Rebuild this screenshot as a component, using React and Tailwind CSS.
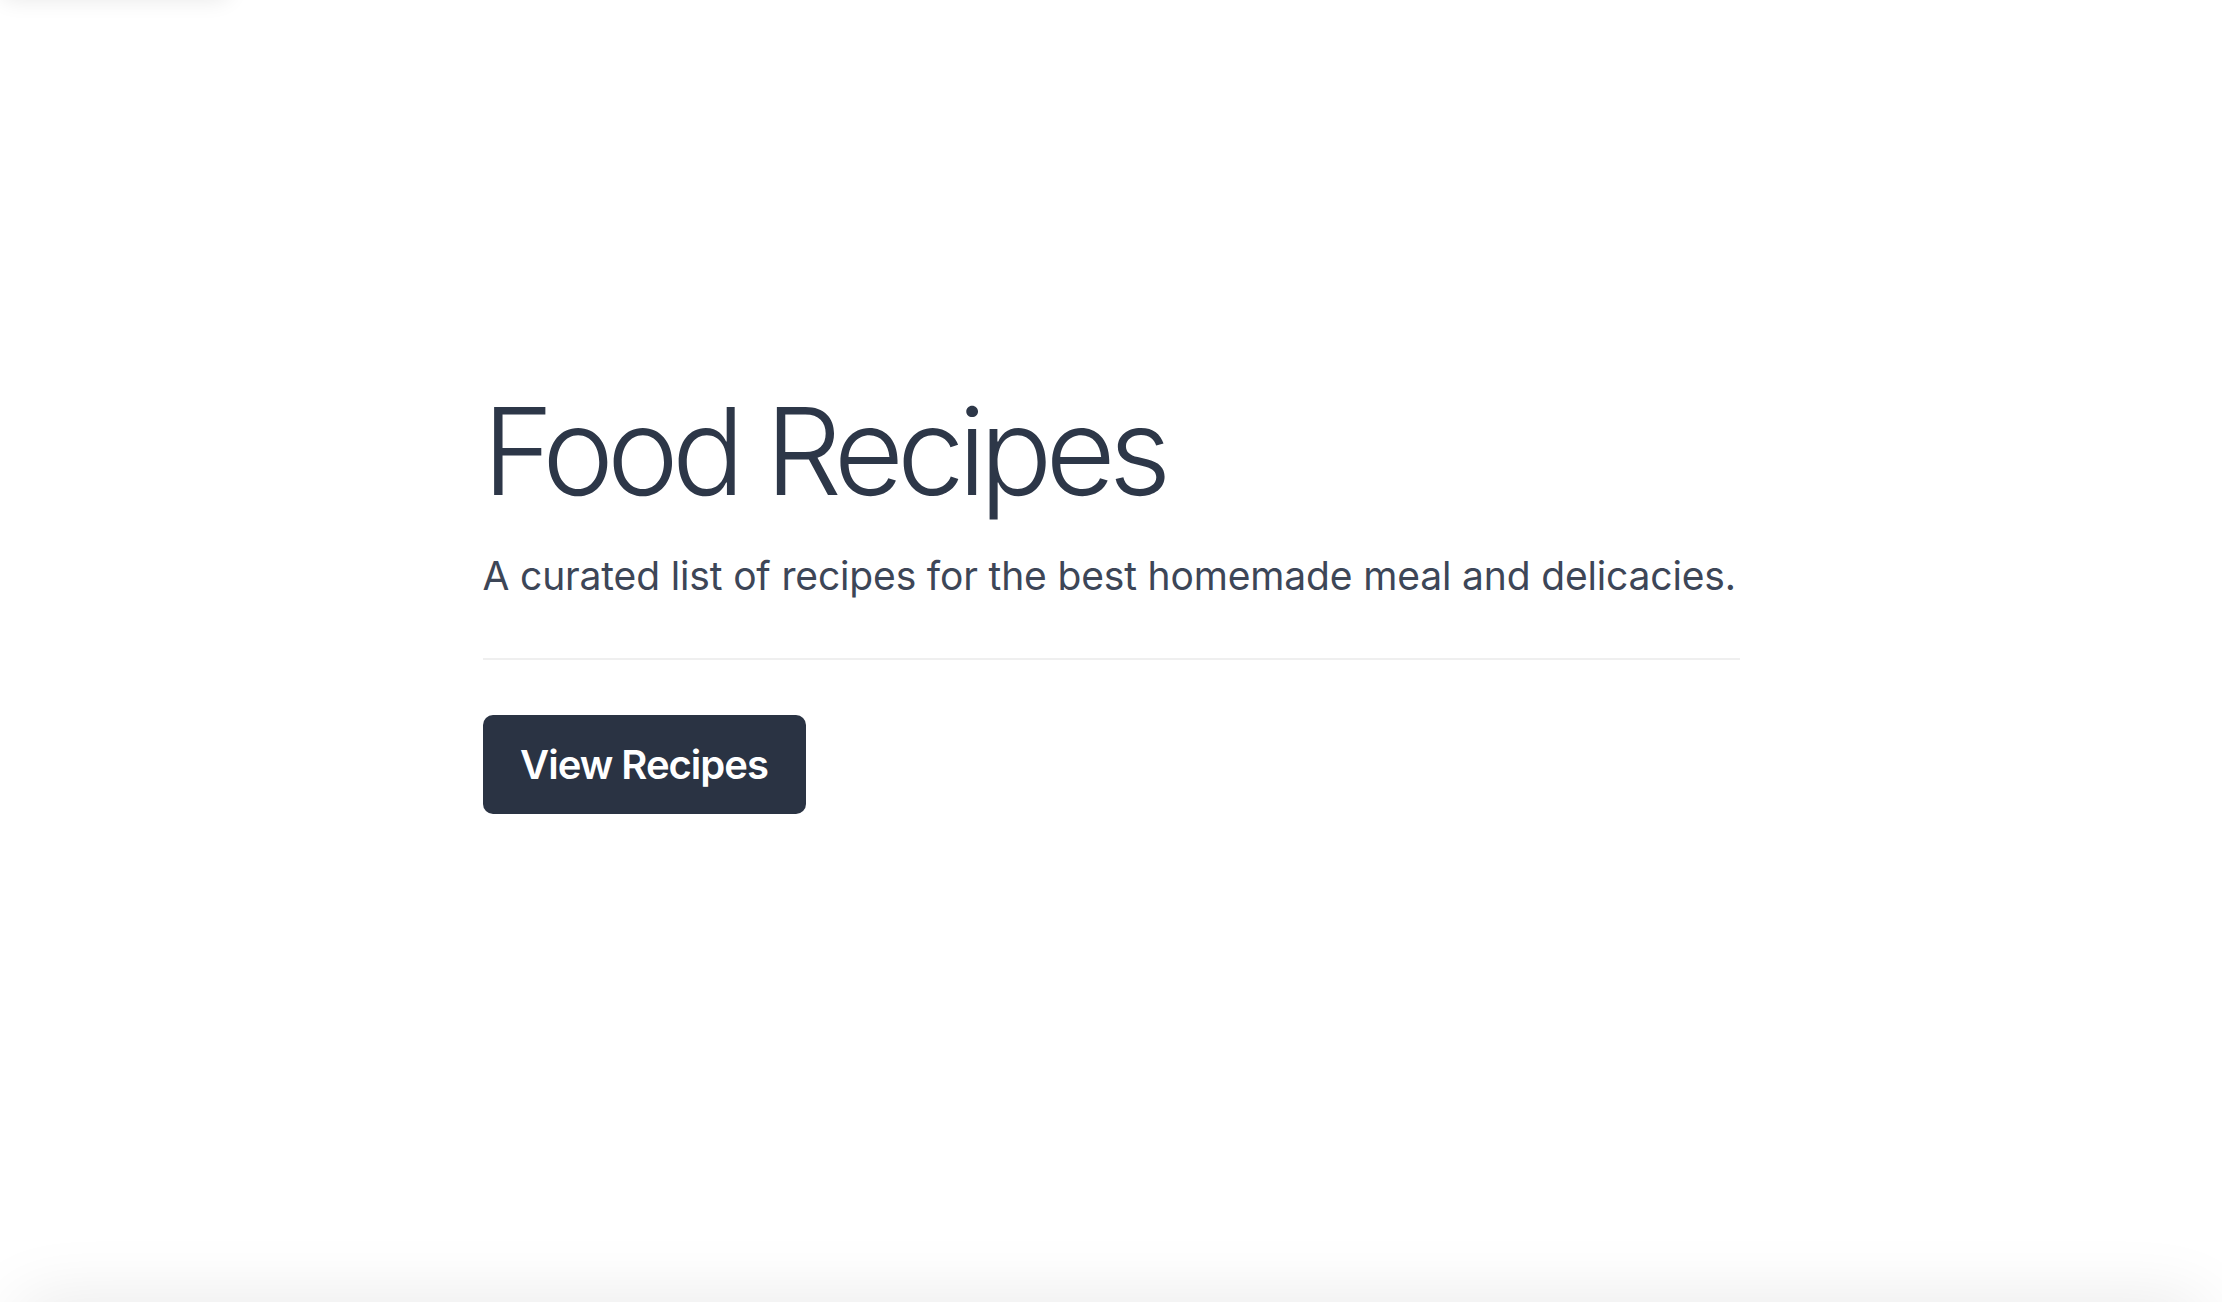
import React from 'react';

export default function App() {
  return (
    <div
      className="h-[1302px] w-full overflow-hidden bg-white flex flex-col"
      style={{ fontFamily: 'Inter, "Noto Sans", sans-serif' }}
    >
      {/* sliver of a card above the fold */}
      <div className="shrink-0 w-[230px] h-[30px] -mt-[30px] rounded-b-xl bg-white shadow-[0_0_22px_rgba(0,0,0,0.09)]" />

      <main className="shrink-0 w-[1257px] mx-auto pt-[391px]">
        <h1 className="text-[121px] leading-none font-light tracking-[-0.056em] text-[#2d3748]">
          Food Recipes
        </h1>
        <p className="mt-[44px] text-[39px] leading-none whitespace-nowrap text-[#3d4657] tracking-[-0.004em]">
          A curated list of recipes for the best homemade meal and delicacies.
        </p>
        <hr className="mt-[63px] border-0 h-[2px] bg-[#efefef]" />
        <button className="mt-[55px] h-[99px] w-[323px] justify-center flex items-center rounded-[10px] bg-[#2a3343] text-white text-[40px] font-semibold tracking-[-0.025em]">
          View Recipes
        </button>
      </main>

      <div className="flex-1" />

      {/* next card, just below the fold */}
      <div className="shrink-0 mx-[14px] h-[60px] -mb-[60px] rounded-[40px] bg-white shadow-[0_0_70px_rgba(0,0,0,0.1)]" />
    </div>
  );
}
